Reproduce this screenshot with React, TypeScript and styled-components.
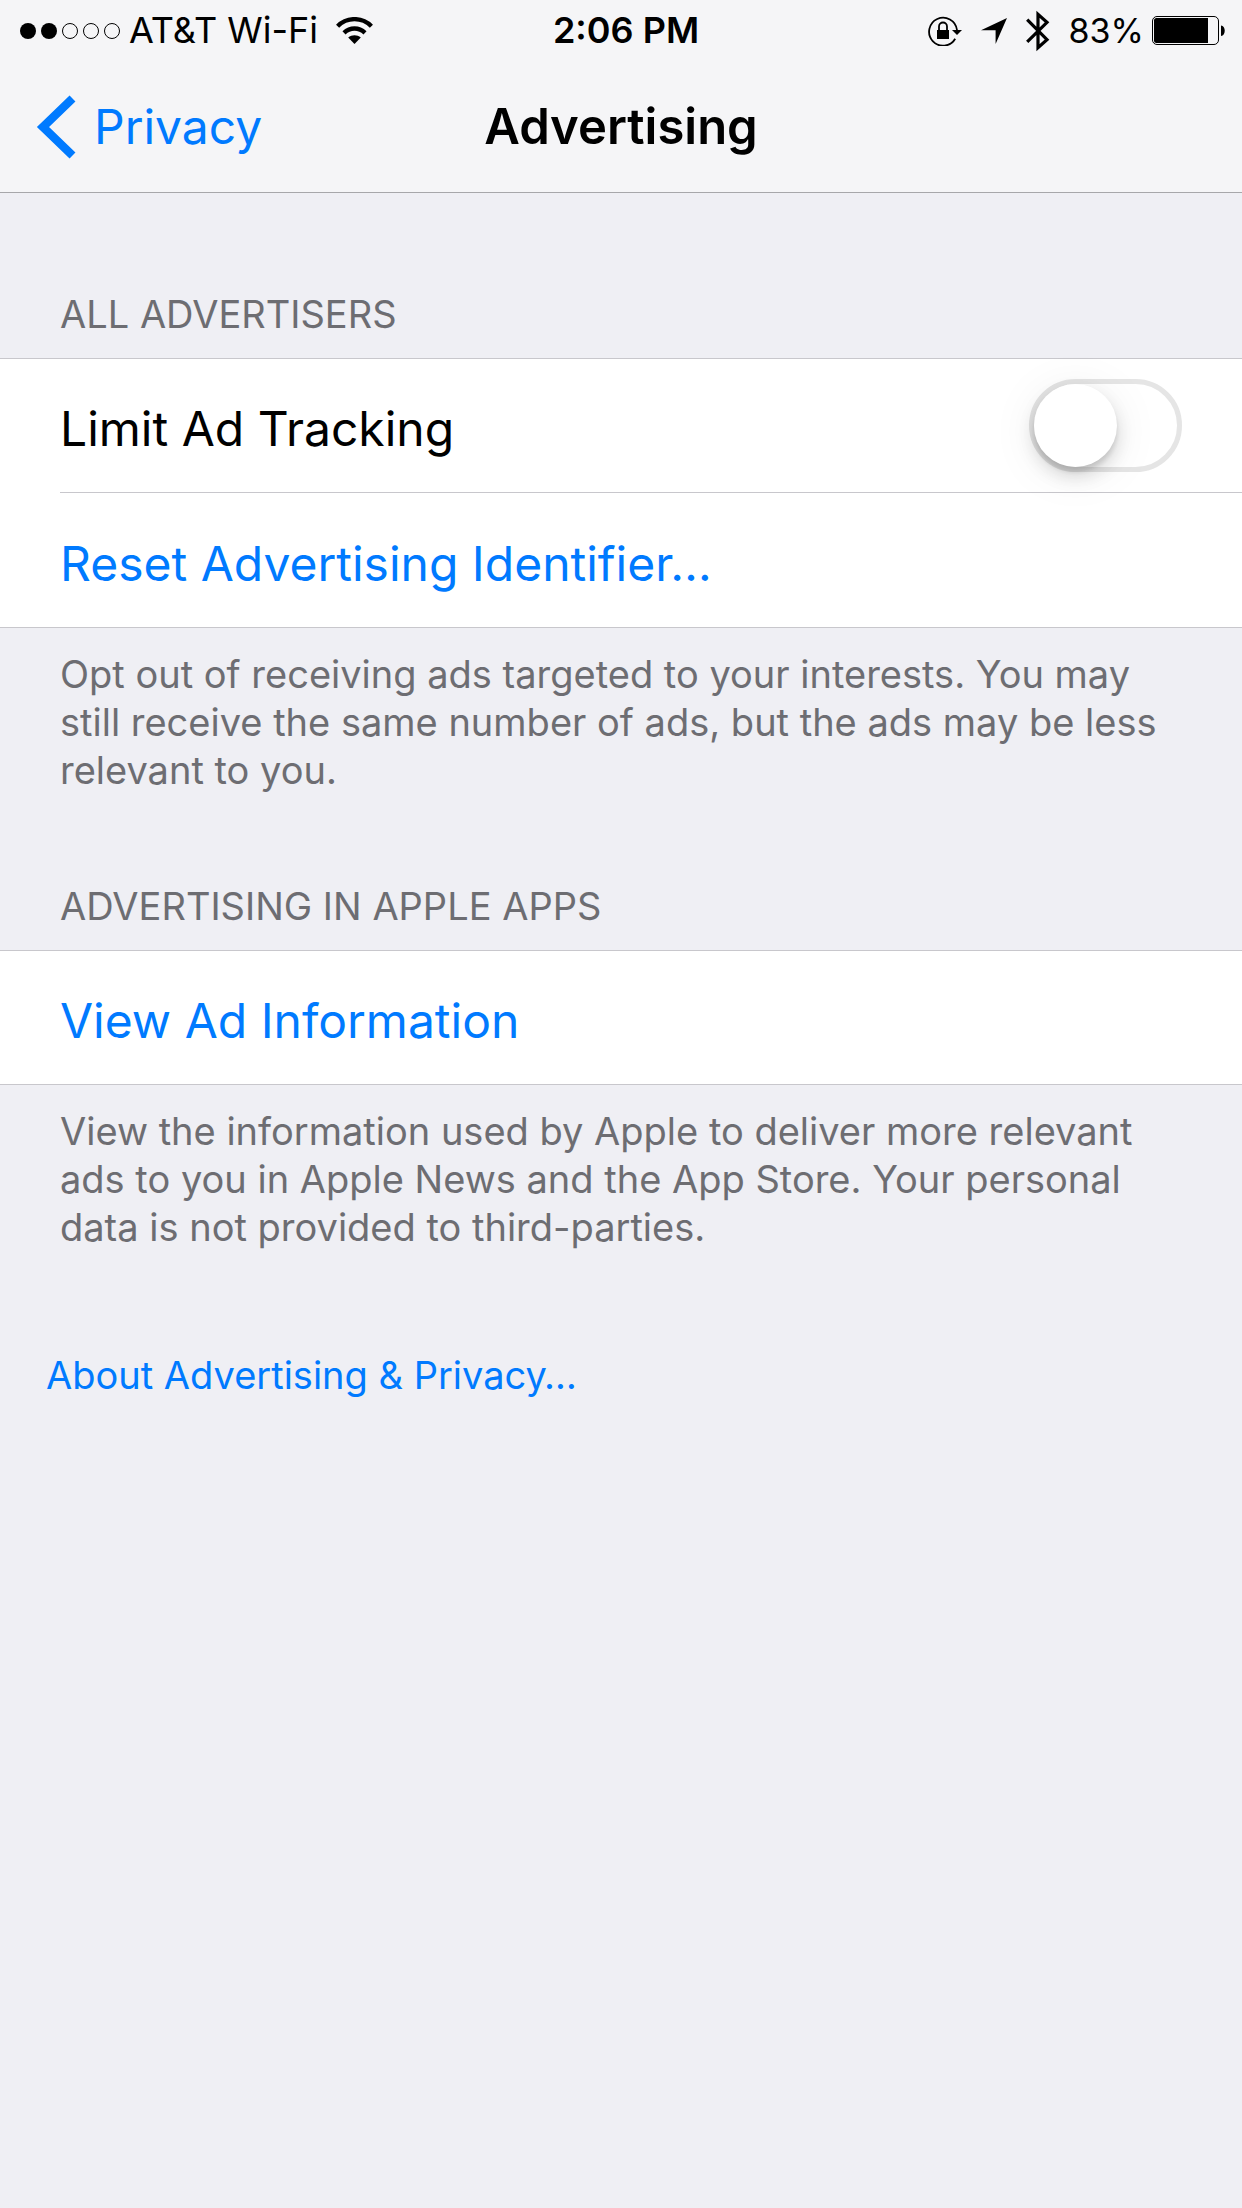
import React, { useState } from "react";
import styled, { createGlobalStyle } from "styled-components";

const color = {
  tint: "#007aff",
  page: "#efeff4",
  bar: "#f5f5f7",
  line: "#c8c7cc",
  barLine: "#a7a7aa",
  muted: "#6d6d72",
};

const GlobalStyle = createGlobalStyle`
  *, *::before { box-sizing: border-box; }
  body {
    margin: 0;
    background: ${color.page};
    font-family: Inter, "Liberation Sans", sans-serif;
    color: #000;
  }
`;

const Screen = styled.div`
  min-height: 100vh;
  background: ${color.page};
`;

const TopBar = styled.header`
  background: ${color.bar};
  border-bottom: 1px solid ${color.barLine};
`;

const StatusBar = styled.div`
  display: grid;
  grid-template-columns: 1fr auto 1fr;
  align-items: center;
  height: 61px;
  padding: 0 10px 0 20px;
  font-size: 36px;
  line-height: 61px;
  white-space: nowrap;
`;

const StatusLeft = styled.div`
  display: flex;
  align-items: center;
  gap: 8px;
`;

const Carrier = styled.span`
  margin-right: 10px;
`;

const StatusRight = styled.div`
  display: flex;
  align-items: center;
  justify-content: flex-end;
  padding-right: 6px;
`;

const RightIcon = styled.svg`
  margin-right: 19px;
`;

const Percent = styled.span`
  margin-right: 8px;
  font-size: 34px;
`;

const Clock = styled.time`
  font-weight: 600;
`;

const NavBar = styled.nav`
  display: grid;
  grid-template-columns: 1fr auto 1fr;
  align-items: center;
  height: 131px;
  padding: 0 36px;
`;

const BackLink = styled.a`
  display: flex;
  align-items: center;
  gap: 18px;
  justify-self: start;
  color: ${color.tint};
  font-size: 48px;
  text-decoration: none;
`;

const Title = styled.h1`
  margin: 0;
  font-size: 49px;
  font-weight: 600;
`;

const Content = styled.main`
  padding-top: 97px;
`;

const Section = styled.section`
  margin-bottom: 88px;
`;

const SectionTitle = styled.h2`
  margin: 0;
  padding: 0 60px 20px;
  color: ${color.muted};
  font-size: 38px;
  font-weight: 400;
  line-height: 48px;
  text-transform: uppercase;
`;

const List = styled.ul`
  margin: 0;
  padding: 0 0 0 60px;
  list-style: none;
  background: #fff;
  border: solid ${color.line};
  border-width: 1px 0;
`;

const Row = styled.li`
  display: flex;
  align-items: center;
  justify-content: space-between;
  min-height: 133px;
  padding-right: 60px;

  & + & {
    min-height: 135px;
    border-top: 1px solid ${color.line};
  }
`;

const RowLabel = styled.label`
  padding-top: 6px;
  font-size: 48px;
`;

const RowButton = styled.button`
  flex: 1;
  padding: 6px 0 0;
  border: 0;
  background: none;
  color: ${color.tint};
  font: inherit;
  font-size: 48px;
  text-align: left;
`;

const Switch = styled.input`
  appearance: none;
  display: flex;
  width: 153px;
  height: 93px;
  margin: 0;
  border: 5px solid #e5e5e5;
  border-radius: 47px;
  background: #fff;

  &::before {
    content: "";
    width: 83px;
    height: 83px;
    border-radius: 50%;
    background: #fff;
    box-shadow: 0 6px 48px rgba(0, 0, 0, 0.08), 0 9px 18px rgba(0, 0, 0, 0.14),
      0 5px 4px rgba(0, 0, 0, 0.1);
  }

  &:checked {
    justify-content: flex-end;
    border-color: #4cd964;
    background: #4cd964;
  }
`;

const Note = styled.p`
  margin: 0;
  padding: 22px 60px 0;
  color: ${color.muted};
  font-size: 38px;
  line-height: 48px;
`;

const FooterLink = styled.a`
  display: inline-block;
  margin: 12px 46px 0;
  color: ${color.tint};
  font-size: 38px;
  line-height: 48px;
  text-decoration: none;
`;

const SignalDots = () => (
  <svg width="101" height="18" viewBox="0 0 101 18" role="img" aria-label="Signal strength">
    {[8, 29, 50, 71, 92].map((cx, i) => (
      <circle
        key={cx}
        cx={cx}
        cy="9"
        r={i < 2 ? 8 : 7.5}
        fill={i < 2 ? "#000" : "none"}
        stroke={i < 2 ? "none" : "#000"}
      />
    ))}
  </svg>
);

const WifiIcon = () => (
  <svg width="37" height="28" viewBox="0 0 37 28" role="img" aria-label="Wi-Fi">
    <g fill="none" stroke="#000" strokeWidth="4.4">
      <path d="M1.6 9.2C11 -0.2 26 -0.2 35.4 9.2" />
      <path d="M8 15.8C14 10 23 10 29 15.8" />
    </g>
    <path d="M18.5 27L12.2 20.6C15.8 17.6 21.2 17.6 24.8 20.6Z" />
  </svg>
);

const RotationLockIcon = () => (
  <RightIcon width="34" height="30" viewBox="0 0 34 30" role="img" aria-label="Rotation lock">
    <path d="M27.2 22.8A14 14 0 1 1 29 14" fill="none" stroke="#000" strokeWidth="1.8" />
    <path d="M24 14H34L29 19Z" />
    <rect x="9" y="14" width="12" height="9" />
    <path d="M11 14V10.5a4 4 0 0 1 8 0V14" fill="none" stroke="#000" strokeWidth="1.8" />
  </RightIcon>
);

const LocationIcon = () => (
  <RightIcon width="26" height="26" viewBox="0 0 26 26" role="img" aria-label="Location">
    <path d="M26 0L14.6 26V12.2H0Z" />
  </RightIcon>
);

const BluetoothIcon = () => (
  <RightIcon width="24" height="42" viewBox="0 0 24 42" role="img" aria-label="Bluetooth">
    <path
      d="M1.2 9.6L21 29.600L12 37.600V4.400L21 12.400L1.200 31.800"
      fill="none"
      stroke="#000"
      strokeWidth="3.2"
      strokeMiterlimit="10"
    />
  </RightIcon>
);

const BatteryIcon = () => (
  <svg width="74" height="30" viewBox="0 0 74 30" role="img" aria-label="Battery">
    <rect x="0.5" y="0.5" width="66" height="28" rx="4.5" fill="none" stroke="#000" />
    <path d="M4.5 2H56V27H4.5A2.5 2.5 0 0 1 2 24.5V4.5A2.5 2.5 0 0 1 4.5 2Z" />
    <path d="M69 9.5C74 10 74 19.5 69 20Z" />
  </svg>
);

const BackChevron = () => (
  <svg width="40" height="64" viewBox="0 0 40 64" aria-hidden="true">
    <path d="M36.500 3.500L7 32L36.500 60.500" fill="none" stroke={color.tint} strokeWidth="8.500" />
  </svg>
);

export default function App() {
  const [limited, setLimited] = useState(false);

  return (
    <>
      <GlobalStyle />
      <Screen>
        <TopBar>
          <StatusBar>
            <StatusLeft>
              <SignalDots />
              <Carrier>AT&amp;T Wi-Fi</Carrier>
              <WifiIcon />
            </StatusLeft>
            <Clock>2:06 PM</Clock>
            <StatusRight>
              <RotationLockIcon />
              <LocationIcon />
              <BluetoothIcon />
              <Percent>83%</Percent>
              <BatteryIcon />
            </StatusRight>
          </StatusBar>
          <NavBar>
            <BackLink href="#privacy">
              <BackChevron />
              Privacy
            </BackLink>
            <Title>Advertising</Title>
          </NavBar>
        </TopBar>
        <Content>
          <Section>
            <SectionTitle>All Advertisers</SectionTitle>
            <List>
              <Row>
                <RowLabel htmlFor="limit">Limit Ad Tracking</RowLabel>
                <Switch
                  id="limit"
                  type="checkbox"
                  checked={limited}
                  onChange={(e) => setLimited(e.target.checked)}
                />
              </Row>
              <Row>
                <RowButton type="button">Reset Advertising Identifier…</RowButton>
              </Row>
            </List>
            <Note>
              Opt out of receiving ads targeted to your interests. You may still receive the same
              number of ads, but the ads may be less relevant to you.
            </Note>
          </Section>
          <Section>
            <SectionTitle>Advertising in Apple Apps</SectionTitle>
            <List>
              <Row>
                <RowButton type="button">View Ad Information</RowButton>
              </Row>
            </List>
            <Note>
              View the information used by Apple to deliver more relevant ads to you in Apple News
              and the App Store. Your personal data is not provided to third-parties.
            </Note>
          </Section>
          <FooterLink href="#about">About Advertising &amp; Privacy…</FooterLink>
        </Content>
      </Screen>
    </>
  );
}
